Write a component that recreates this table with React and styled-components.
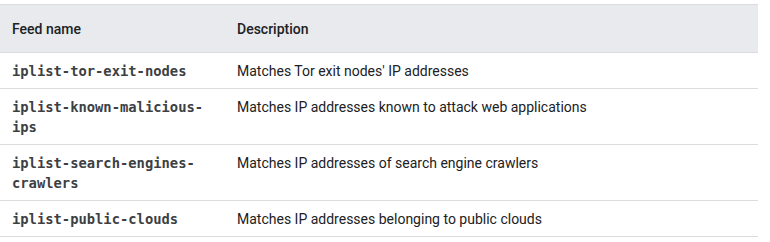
import styled, { createGlobalStyle } from 'styled-components'

const GlobalStyle = createGlobalStyle`
  body {
    margin: 0;
    background: #fff;
    font-family: Roboto, "Noto Sans", Arial, sans-serif;
  }
`

const Wrapper = styled.div`
  padding: 4px 12px 0 0;
`

const Table = styled.table`
  width: 100%;
  border-collapse: collapse;
  table-layout: fixed;
  font-size: 14px;
  line-height: 20px;
  color: #202124;
`

const HeadCell = styled.th`
  box-sizing: border-box;
  background: #e8eaed;
  border-top: 1px solid #dadce0;
  border-bottom: 1px solid #dadce0;
  text-align: left;
  font-weight: 500;
  padding: 14px 12px 13px;
  width: ${(p) => p.$w || 'auto'};
`

const Cell = styled.td`
  border-bottom: 1px solid #dadce0;
  padding: 8px 12px 7px;
  vertical-align: top;
`

const Code = styled.code`
  font-family: "DejaVu Sans Mono", "Liberation Mono", monospace;
  font-size: 13.8px;
  font-weight: 700;
  color: #3c4043;
`

const feeds = [
  ['iplist-tor-exit-nodes', "Matches Tor exit nodes' IP addresses"],
  ['iplist-known-malicious-ips', 'Matches IP addresses known to attack web applications'],
  ['iplist-search-engines-crawlers', 'Matches IP addresses of search engine crawlers'],
  ['iplist-public-clouds', 'Matches IP addresses belonging to public clouds'],
]

const App = () => {
  return (
    <Wrapper>
      <GlobalStyle />
      <Table>
        <thead>
          <tr>
            <HeadCell $w="225px">Feed name</HeadCell>
            <HeadCell>Description</HeadCell>
          </tr>
        </thead>
        <tbody>
          {feeds.map(([name, desc]) => (
            <tr key={name}>
              <Cell><Code>{name}</Code></Cell>
              <Cell>{desc}</Cell>
            </tr>
          ))}
        </tbody>
      </Table>
    </Wrapper>
  )
}

export default App
